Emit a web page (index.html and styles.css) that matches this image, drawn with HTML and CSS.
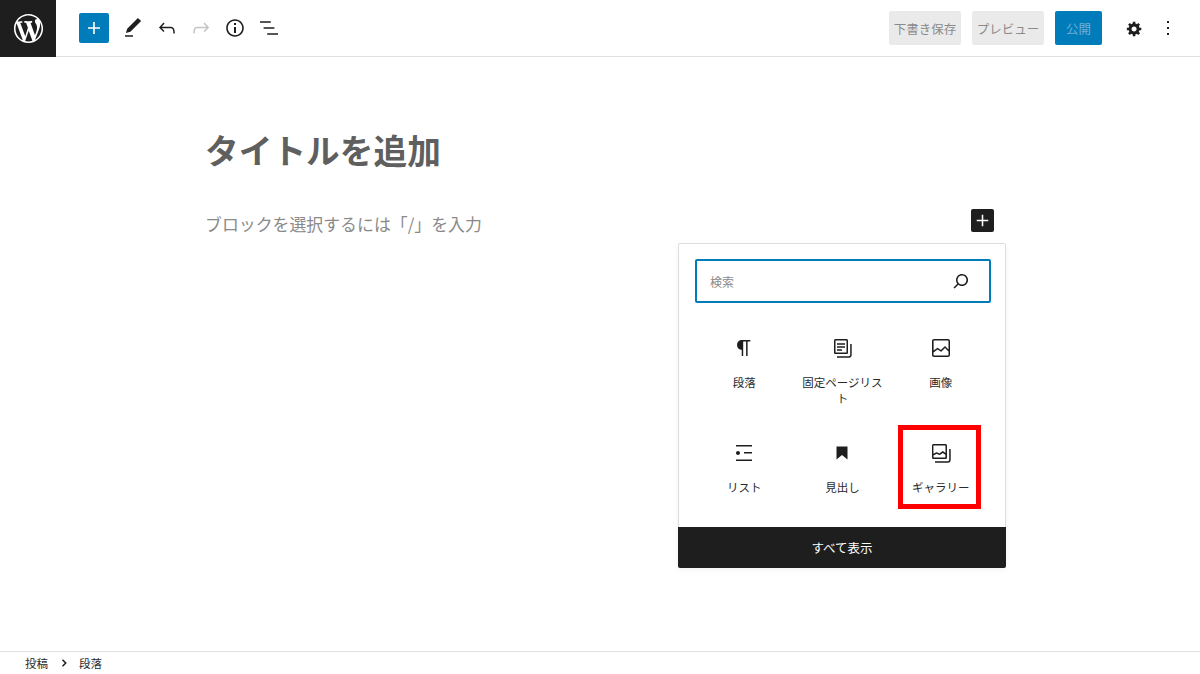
FILE: index.html
```html
<!DOCTYPE html>
<html lang="ja">
<head>
<meta charset="utf-8">
<title>投稿を編集</title>
<link rel="stylesheet" href="styles.css">
</head>
<body>
<div class="app">
  <header class="topbar">
    <div class="logo"><svg viewBox="-2 -2 24 24" width="35" height="35"><path fill="#fff" d="M20 10c0-5.51-4.49-10-10-10C4.48 0 0 4.49 0 10c0 5.52 4.48 10 10 10 5.51 0 10-4.48 10-10zM7.78 15.37L4.37 6.22c.55-.02 1.17-.08 1.17-.08.5-.06.44-1.13-.06-1.11 0 0-1.45.11-2.37.11-.18 0-.37 0-.58-.01C4.12 2.69 6.87 1.11 10 1.11c2.33 0 4.45.87 6.05 2.34-.68-.11-1.65.39-1.65 1.58 0 .74.45 1.36.9 2.1.35.61.55 1.36.55 2.46 0 1.49-1.4 5-1.4 5l-3.03-8.37c.54-.02.82-.17.82-.17.5-.05.44-1.25-.06-1.22 0 0-1.44.12-2.38.12-.87 0-2.33-.12-2.33-.12-.5-.03-.56 1.2-.06 1.22l.92.08 1.26 3.41zM17.41 10c.24-.64.74-1.87.43-4.25.7 1.29 1.05 2.71 1.05 4.25 0 3.29-1.73 6.24-4.4 7.78.97-2.59 1.94-5.2 2.92-7.78zM6.1 18.09C3.12 16.65 1.11 13.53 1.11 10c0-1.3.23-2.48.72-3.59C3.25 10.3 4.67 14.2 6.1 18.09zm4.03-6.63l2.58 6.98c-.86.29-1.76.45-2.71.45-.79 0-1.57-.11-2.29-.33.81-2.38 1.62-4.74 2.42-7.1z"/></svg></div>
    <div class="tools">
      <span class="add"><svg viewBox="0 0 24 24" width="24" height="24"><path fill="#fff" d="M18 11.2h-5.2V6h-1.6v5.2H6v1.6h5.2V18h1.6v-5.2H18z"/></svg></span>
      <span class="tool"><svg viewBox="0 0 24 24" width="24" height="24"><path d="M20.1 5.1L16.9 2 6.2 12.7l-1.3 4.4 4.5-1.3L20.1 5.1zM4 20.8h8v-1.5H4v1.5z"/></svg></span>
      <span class="tool"><svg viewBox="0 0 24 24" width="24" height="24"><path d="M18.3 11.7c-.6-.6-1.4-.9-2.3-.9H6.7l2.9-3.3-1.1-1-4.5 5L8.5 16l1-1-2.7-2.7H16c.5 0 .9.2 1.3.5 1 1 1 3.4 1 4.5v.3h1.5v-.2c0-1.5 0-4.3-1.5-5.7z"/></svg></span>
      <span class="tool off"><svg viewBox="0 0 24 24" width="24" height="24"><path d="M15.6 6.5l-1.1 1 2.9 3.3H8c-.9 0-1.7.3-2.3.9-1.4 1.5-1.4 4.2-1.4 5.6v.2h1.5v-.3c0-1.1 0-3.5 1-4.5.3-.3.7-.5 1.3-.5h9.2L14.5 15l1.1 1.1 4.6-4.6-4.6-5z"/></svg></span>
      <span class="tool"><svg viewBox="0 0 24 24" width="24" height="24"><path d="M12 3.2c-4.8 0-8.8 3.9-8.8 8.8 0 4.8 3.9 8.8 8.8 8.8 4.8 0 8.8-3.9 8.8-8.8 0-4.8-4-8.8-8.8-8.8zm0 16c-4 0-7.2-3.3-7.2-7.2C4.8 8 8 4.8 12 4.8s7.2 3.3 7.2 7.2c0 4-3.2 7.2-7.2 7.2zM11 17h2v-6h-2v6zm0-8h2V7h-2v2z"/></svg></span>
      <span class="tool"><svg viewBox="0 0 24 24" width="24" height="24"><path d="M13.8 5.2H3v1.5h10.8V5.2zm-3.6 12v1.5H21v-1.5H10.2zm7.2-6H6.6v1.5h10.8v-1.5z"/></svg></span>
    </div>
    <div class="actions">
      <span class="btn">下書き保存</span>
      <span class="btn">プレビュー</span>
      <span class="btn primary">公開</span>
      <span class="cog"><svg viewBox="0 0 20 20" width="17" height="17"><path d="M18 12h-2.18c-.17.7-.44 1.35-.81 1.93l1.54 1.54-2.1 2.1-1.54-1.54c-.58.36-1.23.63-1.91.79V19H8v-2.18c-.68-.16-1.33-.43-1.91-.79l-1.54 1.54-2.12-2.12 1.54-1.54c-.36-.58-.63-1.23-.79-1.91H1V9.03h2.17c.16-.7.44-1.35.8-1.94L2.43 5.55l2.1-2.1 1.54 1.54c.58-.37 1.24-.64 1.93-.81V2h3v2.18c.68.16 1.33.43 1.91.79l1.54-1.54 2.12 2.12-1.54 1.54c.36.59.64 1.24.8 1.94H18V12zm-8.5 1.5c1.66 0 3-1.34 3-3s-1.34-3-3-3-3 1.34-3 3 1.34 3 3 3z"/></svg></span>
      <span class="more"><svg viewBox="0 0 24 24" width="24" height="24"><path d="M13 19h-2v-2h2v2zm0-6h-2v-2h2v2zm0-6h-2V5h2v2z"/></svg></span>
    </div>
  </header>

  <main class="editor">
    <div class="canvas">
      <h1 class="title">タイトルを追加</h1>
      <div class="para">
        <p class="hint">ブロックを選択するには「/」を入力</p>
        <span class="para-add"><svg viewBox="0 0 24 24" width="23" height="23"><path fill="#fff" d="M18 11.2h-5.2V6h-1.6v5.2H6v1.6h5.2V18h1.6v-5.2H18z"/></svg></span>
        <div class="popover">
          <div class="search-wrap">
            <div class="search">
              <span class="search-text">検索</span>
              <svg viewBox="0 0 24 24" width="24" height="24"><path d="M13 5c-3.3 0-6 2.7-6 6 0 1.4.5 2.7 1.3 3.7l-3.8 3.8 1.1 1.1 3.8-3.8c1 .8 2.3 1.3 3.7 1.3 3.3 0 6-2.7 6-6S16.3 5 13 5zm0 10.5c-2.5 0-4.5-2-4.5-4.5s2-4.5 4.5-4.5 4.5 2 4.5 4.5-2 4.5-4.5 4.5z"/></svg>
            </div>
          </div>
          <div class="blocks">
            <div class="block">
              <svg viewBox="0 0 24 24" width="24" height="24"><path d="M18.3 4H9.9v-.1l-.9.2c-2.3.4-4 2.4-4 4.8s1.7 4.4 4 4.8l.7.1V20h1.5V5.5h2.9V20h1.5V5.5h2.7V4z"/></svg>
              <span class="label">段落</span>
            </div>
            <div class="block">
              <svg viewBox="0 0 24 24" width="24" height="24"><path d="M16.4 3H5.6C4.7 3 4 3.7 4 4.6v11.8c0 .9.7 1.6 1.6 1.6h10.8c.9 0 1.6-.7 1.6-1.6V4.6c0-.9-.7-1.6-1.6-1.6zm.1 13.4c0 .1-.1.1-.1.1H5.6c-.1 0-.1-.1-.1-.1V4.6c0-.1.1-.1.1-.1h10.8c.1 0 .1.1.1.1v11.8zM20.2 8v11c0 .7-.6 1.2-1.2 1.2H7v1.5h12c1.5 0 2.7-1.2 2.7-2.8V8h-1.5zM7 7.2h8v1.5H7V7.2zm0 3h8v1.5H7v-1.5zm0 3h5v1.5H7v-1.5z"/></svg>
              <span class="label">固定ページリスト</span>
            </div>
            <div class="block">
              <svg viewBox="0 0 24 24" width="24" height="24"><path d="M19 3H5c-1.1 0-2 .9-2 2v14c0 1.1.9 2 2 2h14c1.1 0 2-.9 2-2V5c0-1.1-.9-2-2-2zM5 4.5h14c.3 0 .5.2.5.5v8.4l-3-2.9c-.3-.3-.8-.3-1 0L11.9 14 9 12c-.3-.2-.6-.2-.8 0l-3.6 2.6V5c-.1-.3.1-.5.4-.5zm14 15H5c-.3 0-.5-.2-.5-.5v-2.4l4.1-3 3 1.9c.3.2.7.2.9-.1L16 12l3.5 3.4V19c0 .3-.2.5-.5.5z"/></svg>
              <span class="label">画像</span>
            </div>
            <div class="block">
              <svg viewBox="0 0 24 24" width="24" height="24"><path d="M4 4v1.5h16V4H4zm8 8.5h8V11h-8v1.5zM4 20h16v-1.5H4V20zm4-8c0-1.1-.9-2-2-2s-2 .9-2 2 .9 2 2 2 2-.9 2-2z"/></svg>
              <span class="label">リスト</span>
            </div>
            <div class="block">
              <svg viewBox="0 0 24 24" width="24" height="24"><path d="M6.5 5.5v13l5.5-4.4 5.5 4.4v-13z"/></svg>
              <span class="label">見出し</span>
            </div>
            <div class="block">
              <svg viewBox="0 0 24 24" width="24" height="24"><path d="M20.2 8v11c0 .7-.6 1.2-1.2 1.2H6v1.5h13c1.5 0 2.7-1.2 2.7-2.8V8zM18 16.4V4.6c0-.9-.7-1.6-1.6-1.6H4.6C3.7 3 3 3.7 3 4.6v11.8c0 .9.7 1.6 1.6 1.6h11.8c.9 0 1.6-.7 1.6-1.6zM4.5 4.6c0-.1.1-.1.1-.1h11.8c.1 0 .1.1.1.1V12l-2.3-1.7c-.3-.2-.6-.2-.9 0l-2.9 2.1L8 11.3c-.2-.1-.5-.1-.7 0l-2.9 1.5V4.6zm.1 12c-.1 0-.1-.1-.1-.1v-2l3.2-1.7 2.4 1.2c.2.1.5.1.8 0l2.9-2.1 2.6 1.9v2.7c0 .1-.1.1-.1.1H4.6z"/></svg>
              <span class="label">ギャラリー</span>
            </div>
          </div>
          <div class="show-all">すべて表示</div>
          <div class="highlight"></div>
        </div>
      </div>
    </div>
  </main>

  <footer class="crumbs">
    <span>投稿</span>
    <svg viewBox="0 0 24 24" width="12" height="12"><path d="M9 5.5 15.5 12 9 18.5" fill="none" stroke="#1e1e1e" stroke-width="3"/></svg>
    <span>段落</span>
  </footer>
</div>
</body>
</html>
```
FILE: styles.css
```css
* { box-sizing: border-box; }
html, body { margin: 0; height: 100%; background: #fff; overflow: hidden; }
body {
  font-family: "Noto Sans CJK JP", "Noto Sans", sans-serif;
  color: #1e1e1e;
}
svg { display: block; fill: #1e1e1e; flex: none; }

.app { display: flex; flex-direction: column; height: 674px; }

.topbar {
  flex: none;
  height: 57px;
  display: flex;
  align-items: center;
  border-bottom: 1px solid #e0e0e0;
}
.logo {
  width: 56px;
  height: 57px;
  margin-bottom: -1px;
  background: #1e1e1e;
  display: flex;
  align-items: center;
  justify-content: center;
}
.tools { display: flex; align-items: center; margin-left: 23px; }
.add {
  width: 30px;
  height: 30px;
  margin-right: 7px;
  background: #007cba;
  border-radius: 2px;
  display: flex;
  align-items: center;
  justify-content: center;
}
.tool { width: 34px; display: flex; justify-content: center; }
.tool.off svg { fill: #c4c4c4; }

.actions { margin-left: auto; display: flex; align-items: center; padding-right: 20px; }
.btn {
  height: 34px;
  width: 72px;
  margin-right: 11px;
  background: #eaeaea;
  border-radius: 2px;
  color: #8a8a8a;
  font-size: 12.5px;
  display: flex;
  align-items: center;
  justify-content: center;
}
.btn.primary { width: 47px; margin-right: 0; background: #007cba; color: #6fb0d6; }
.cog { margin-left: 24px; width: 17px; }
.more { margin-left: 13px; width: 24px; }

.editor { flex: 1; min-height: 0; }
.canvas { width: 788px; margin: 0 auto; padding-top: 53px; }
.title {
  margin: 0 0 0 -1px;
  height: 80px;
  font-size: 33.7px;
  line-height: 80px;
  font-weight: 700;
  color: #5f5f5f;
}
.para { position: relative; margin-top: 19px; height: 28px; display: flex; align-items: center; justify-content: space-between; }
.hint { margin: 2px 0 0 -1px; font-size: 16.9px; line-height: 28px; color: #8a8a8a; }
.para-add {
  width: 23px;
  height: 23px;
  background: #1e1e1e;
  border-radius: 2px;
  margin-top: -6px;
}

.popover {
  position: absolute;
  left: 472px;
  top: 34px;
  width: 328px;
  height: 325px;
  background: #fff;
  border: 1px solid #ddd;
  border-radius: 2px;
  box-shadow: 0 2px 6px rgba(0, 0, 0, 0.05);
  display: flex;
  flex-direction: column;
}
.search-wrap { flex: none; padding: 15px 14px 0 16px; }
.search {
  height: 44px;
  border: 2px solid #007cba;
  border-radius: 2px;
  display: flex;
  align-items: center;
  justify-content: space-between;
  padding: 0 16px 0 13px;
}
.search-text { font-size: 12px; color: #8a8a8a; }
.blocks {
  flex: 1;
  min-height: 0;
  padding: 30px 15px 0 16px;
  display: grid;
  grid-template-columns: repeat(3, 1fr);
  grid-template-rows: 93px 80px;
  row-gap: 12px;
  align-content: start;
}
.block { display: flex; flex-direction: column; align-items: center; padding: 0 7px; }
.block svg { margin-top: 3px; }
.label {
  margin-top: 14px;
  font-size: 11.5px;
  line-height: 16px;
  text-align: center;
  word-break: break-all;
  color: #2a2a2a;
}
.show-all {
  flex: none;
  height: 41px;
  margin: 0 -1px -1px;
  background: #1e1e1e;
  border-radius: 0 0 2px 2px;
  color: #fff;
  font-size: 12.5px;
  display: flex;
  align-items: center;
  justify-content: center;
}
.highlight {
  position: absolute;
  left: 219px;
  top: 181px;
  width: 83px;
  height: 84px;
  border: 5px solid #f00;
}

.crumbs {
  flex: none;
  height: 23px;
  border-top: 1px solid #e0e0e0;
  padding-left: 25px;
  display: flex;
  align-items: center;
  gap: 9.5px;
  font-size: 11.5px;
  color: #2a2a2a;
}
```
